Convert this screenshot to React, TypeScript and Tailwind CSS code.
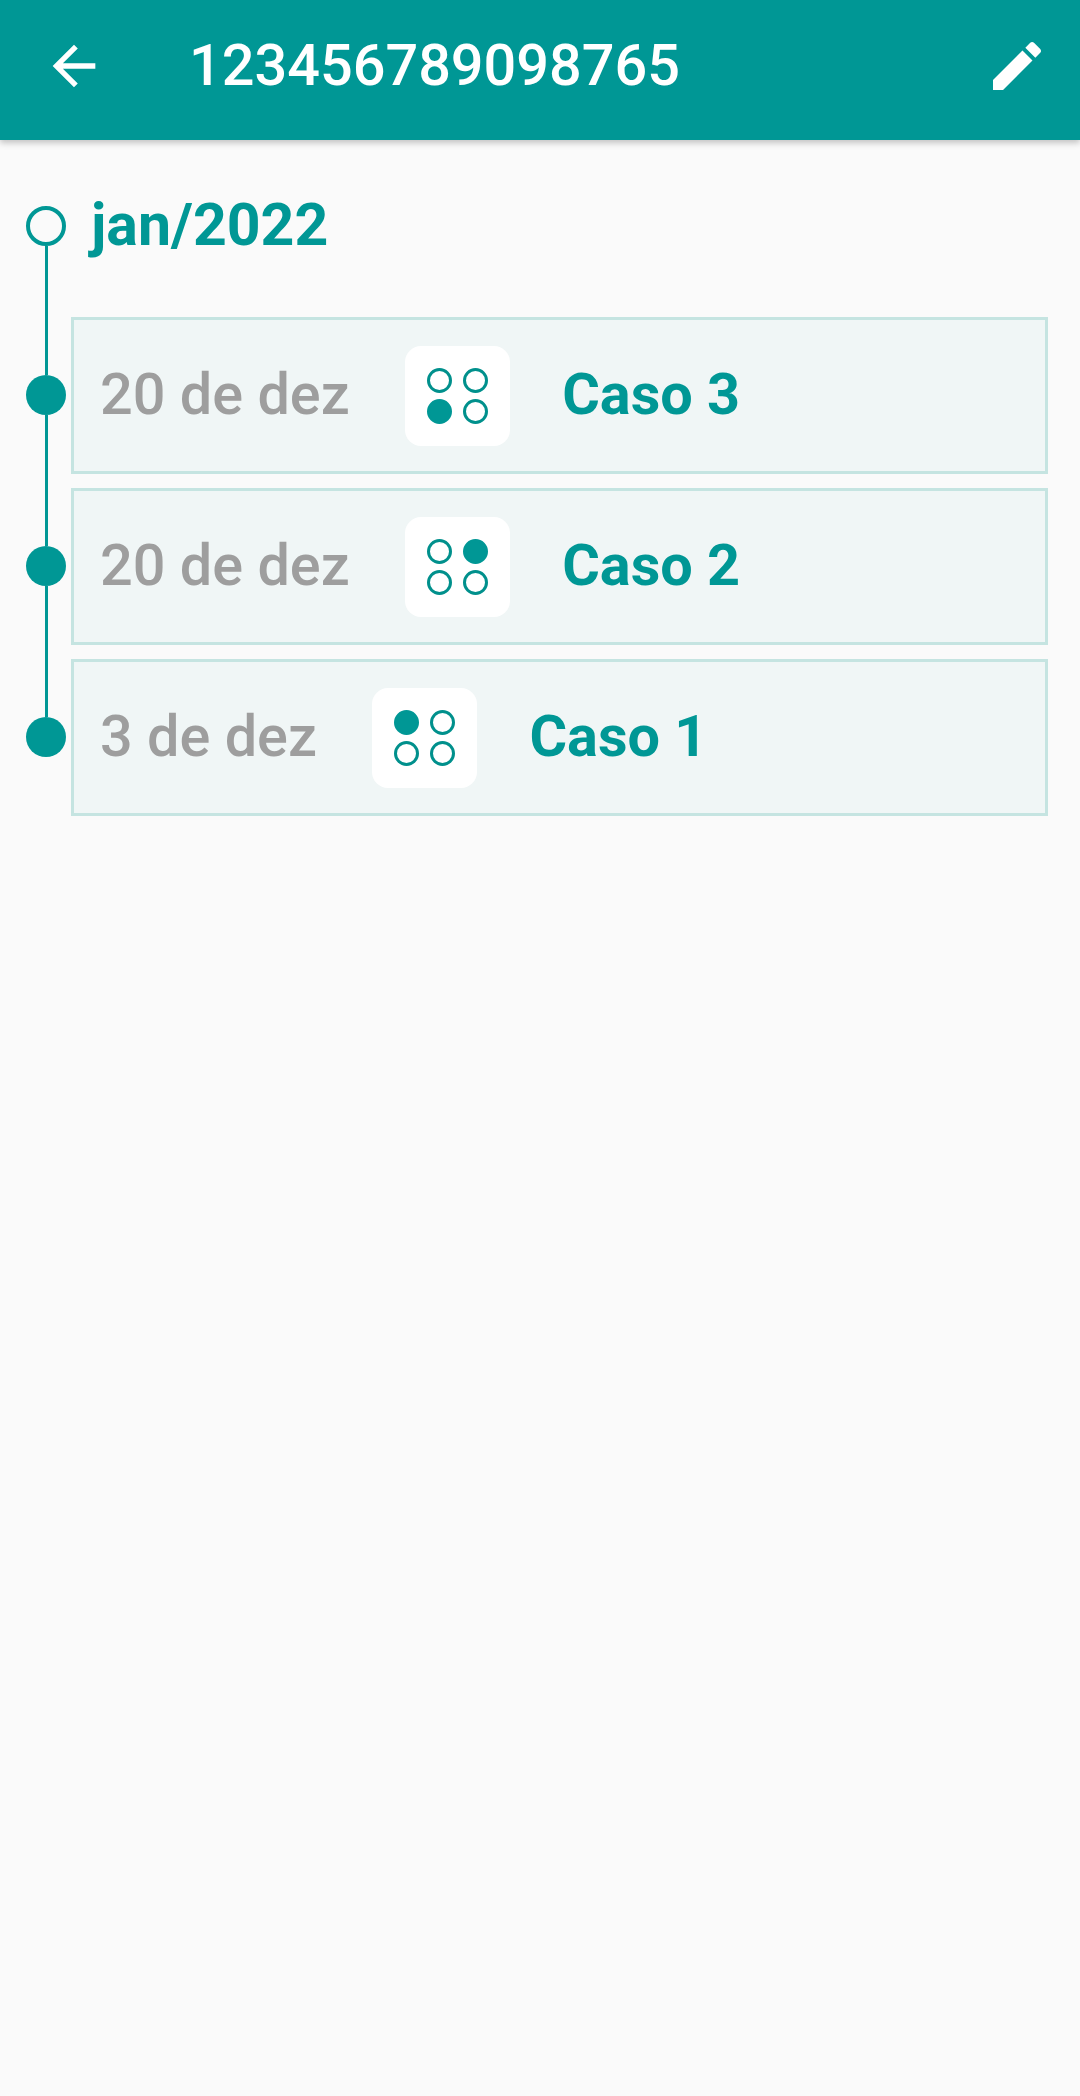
import React from "react";

const cases = [
  { date: "20 de dez", name: "Caso 3", active: 2 },
  { date: "20 de dez", name: "Caso 2", active: 1 },
  { date: "3 de dez", name: "Caso 1", active: 0 },
];

function Dots({ active }: { active: number }) {
  return (
    <div className="grid grid-cols-2 gap-x-[11px] gap-y-[6px]">
      {[0, 1, 2, 3].map((i) => (
        <div
          key={i}
          className={
            i === active
              ? "w-[25px] h-[25px] rounded-full bg-[#009795] border-[3px] border-[#009795]"
              : "w-[25px] h-[25px] rounded-full border-[3px] border-[#00908c]"
          }
        ></div>
      ))}
    </div>
  );
}

export default function App() {
  return (
    <div className="flex flex-col h-[2096px] bg-[#fafafa] font-['Roboto',sans-serif]">
      <header className="flex items-center h-[140px] shrink-0 pb-[8px] bg-[#009795] text-white shadow-[0_3px_6px_rgba(0,0,0,0.22)]">
        <svg viewBox="0 0 24 24" fill="currentColor" className="w-[64px] h-[64px] ml-[42px]">
          <path d="M20 11H7.83l5.59-5.59L12 4l-8 8 8 8 1.41-1.41L7.83 13H20v-2z" />
        </svg>
        <h1 className="ml-[83px] text-[57.6px] leading-none font-medium">123456789098765</h1>
        <svg viewBox="0 0 24 24" fill="currentColor" className="w-[64px] h-[64px] ml-auto mr-[31px]">
          <path d="M3 17.25V21h3.75L17.81 9.94l-3.75-3.75L3 17.25zM20.71 7.04c.39-.39.39-1.02 0-1.41l-2.34-2.34c-.39-.39-1.02-.39-1.41 0l-1.83 1.83 3.75 3.75 1.83-1.83z" />
        </svg>
      </header>

      <div className="flex pl-[26px] h-[170px]">
        <div className="flex flex-col items-center w-[40px] pt-[66px]">
          <div className="w-[40px] h-[40px] shrink-0 rounded-full border-[4px] border-[#009795]"></div>
          <div className="w-[3px] flex-1 bg-[#009795]"></div>
        </div>
        <div className="ml-[25px] pt-[56px] text-[59px] leading-[58px] font-bold text-[#009795]">jan/2022</div>
      </div>

      {cases.map((c, i) => (
        <div key={c.name} className="flex items-stretch pl-[26px] pr-[32px]">
          <div className="flex flex-col items-center w-[40px] shrink-0">
            <div className="w-[3px] flex-1 bg-[#009795]"></div>
            <div className="w-[40px] h-[40px] shrink-0 rounded-full bg-[#009795]"></div>
            <div className={i < cases.length - 1 ? "w-[3px] h-[66px] bg-[#009795]" : "h-[66px]"}></div>
          </div>
          <div className="flex-1 ml-[5px] py-[7px]">
            <div className="flex items-center h-[157px] pl-[26px] bg-[#f0f6f6] border-[3px] border-[#c5e4e1]">
              <span className="mb-[2px] text-[57.6px] leading-none font-medium text-[#9e9e9e]">{c.date}</span>
              <div className="flex items-center justify-center w-[105px] h-[100px] ml-[55px] rounded-[16px] bg-white">
                <Dots active={c.active} />
              </div>
              <span className="mb-[2px] ml-[52.5px] text-[57.6px] leading-none font-bold text-[#009795]">{c.name}</span>
            </div>
          </div>
        </div>
      ))}
    </div>
  );
}
